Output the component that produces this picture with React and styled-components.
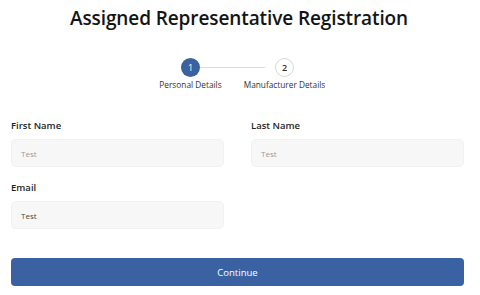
import React from "react";
import styled, { createGlobalStyle } from "styled-components";

const Global = createGlobalStyle`
  html, body { margin: 0; padding: 0; background: #fff; }
  body { font-family: "Open Sans", "Noto Sans", sans-serif; color: #1f1f1f; }
`;

const Page = styled.div`
  width: 453px;
  padding: 0 16px 0 11px;
  display: flex;
  flex-direction: column;
`;

const Title = styled.h1`
  margin: 5px 0 0;
  font-size: 19px;
  font-weight: 600;
  letter-spacing: -0.1px;
  line-height: 27px;
  text-align: center;
  color: #141414;
  padding-left: 3px;
`;

const Stepper = styled.div`
  display: flex;
  justify-content: center;
  align-items: flex-start;
  margin-top: 26px;
`;

const Step = styled.div`
  display: flex;
  flex-direction: column;
  align-items: center;
  width: 84px;
  position: relative;
  z-index: 1;
`;

const Circle = styled.div`
  width: 19px;
  height: 19px;
  border-radius: 50%;
  box-sizing: border-box;
  display: flex;
  align-items: center;
  justify-content: center;
  font-size: 9px;
  font-weight: ${(p) => (p.$active ? 400 : 600)};
  background: ${(p) => (p.$active ? "#3a62a0" : "#fff")};
  color: ${(p) => (p.$active ? "#fff" : "#333")};
  border: ${(p) => (p.$active ? "none" : "1px solid #d8d8d8")};
`;

const StepLabel = styled.div`
  margin-top: 2px;
  font-size: 8.3px;
  line-height: 11px;
  color: #333;
  white-space: nowrap;
`;

const Line = styled.div`
  flex: none;
  width: 65px;
  height: 1px;
  background: #dcdcdc;
  margin: 9px -22.5px 0 -32.5px;
`;

const Grid = styled.div`
  display: grid;
  grid-template-columns: 213px 213px;
  column-gap: 27px;
  row-gap: 14px;
  margin-top: 29px;
`;

const Field = styled.div`
  display: flex;
  flex-direction: column;
`;

const Label = styled.label`
  font-size: 9.5px;
  font-weight: 600;
  line-height: 13px;
  color: #1f1f1f;
  margin-bottom: 7px;
`;

const Input = styled.div`
  height: 28px;
  box-sizing: border-box;
  border-radius: 5px;
  background: #f7f7f7;
  border: 1px solid #f1f1f1;
  display: flex;
  align-items: center;
  padding-left: 9px;
  font-size: 8px;
  color: ${(p) => (p.$filled ? "#444" : "#9a9a9a")};
`;

const Button = styled.button`
  margin-top: 29px;
  height: 28px;
  width: 453px;
  border: none;
  border-radius: 4px;
  background: #3a62a3;
  color: #fff;
  font-family: "Open Sans", sans-serif;
  font-size: 9.5px;
  cursor: pointer;
`;

export default function App() {
  return (
    <>
      <Global />
      <Page>
        <Title>Assigned Representative Registration</Title>
        <Stepper>
          <Step>
            <Circle $active>1</Circle>
            <StepLabel>Personal Details</StepLabel>
          </Step>
          <Line />
          <Step>
            <Circle>2</Circle>
            <StepLabel>Manufacturer Details</StepLabel>
          </Step>
        </Stepper>
        <Grid>
          <Field>
            <Label>First Name</Label>
            <Input>Test</Input>
          </Field>
          <Field>
            <Label>Last Name</Label>
            <Input>Test</Input>
          </Field>
          <Field>
            <Label>Email</Label>
            <Input $filled>Test</Input>
          </Field>
        </Grid>
        <Button>Continue</Button>
      </Page>
    </>
  );
}
